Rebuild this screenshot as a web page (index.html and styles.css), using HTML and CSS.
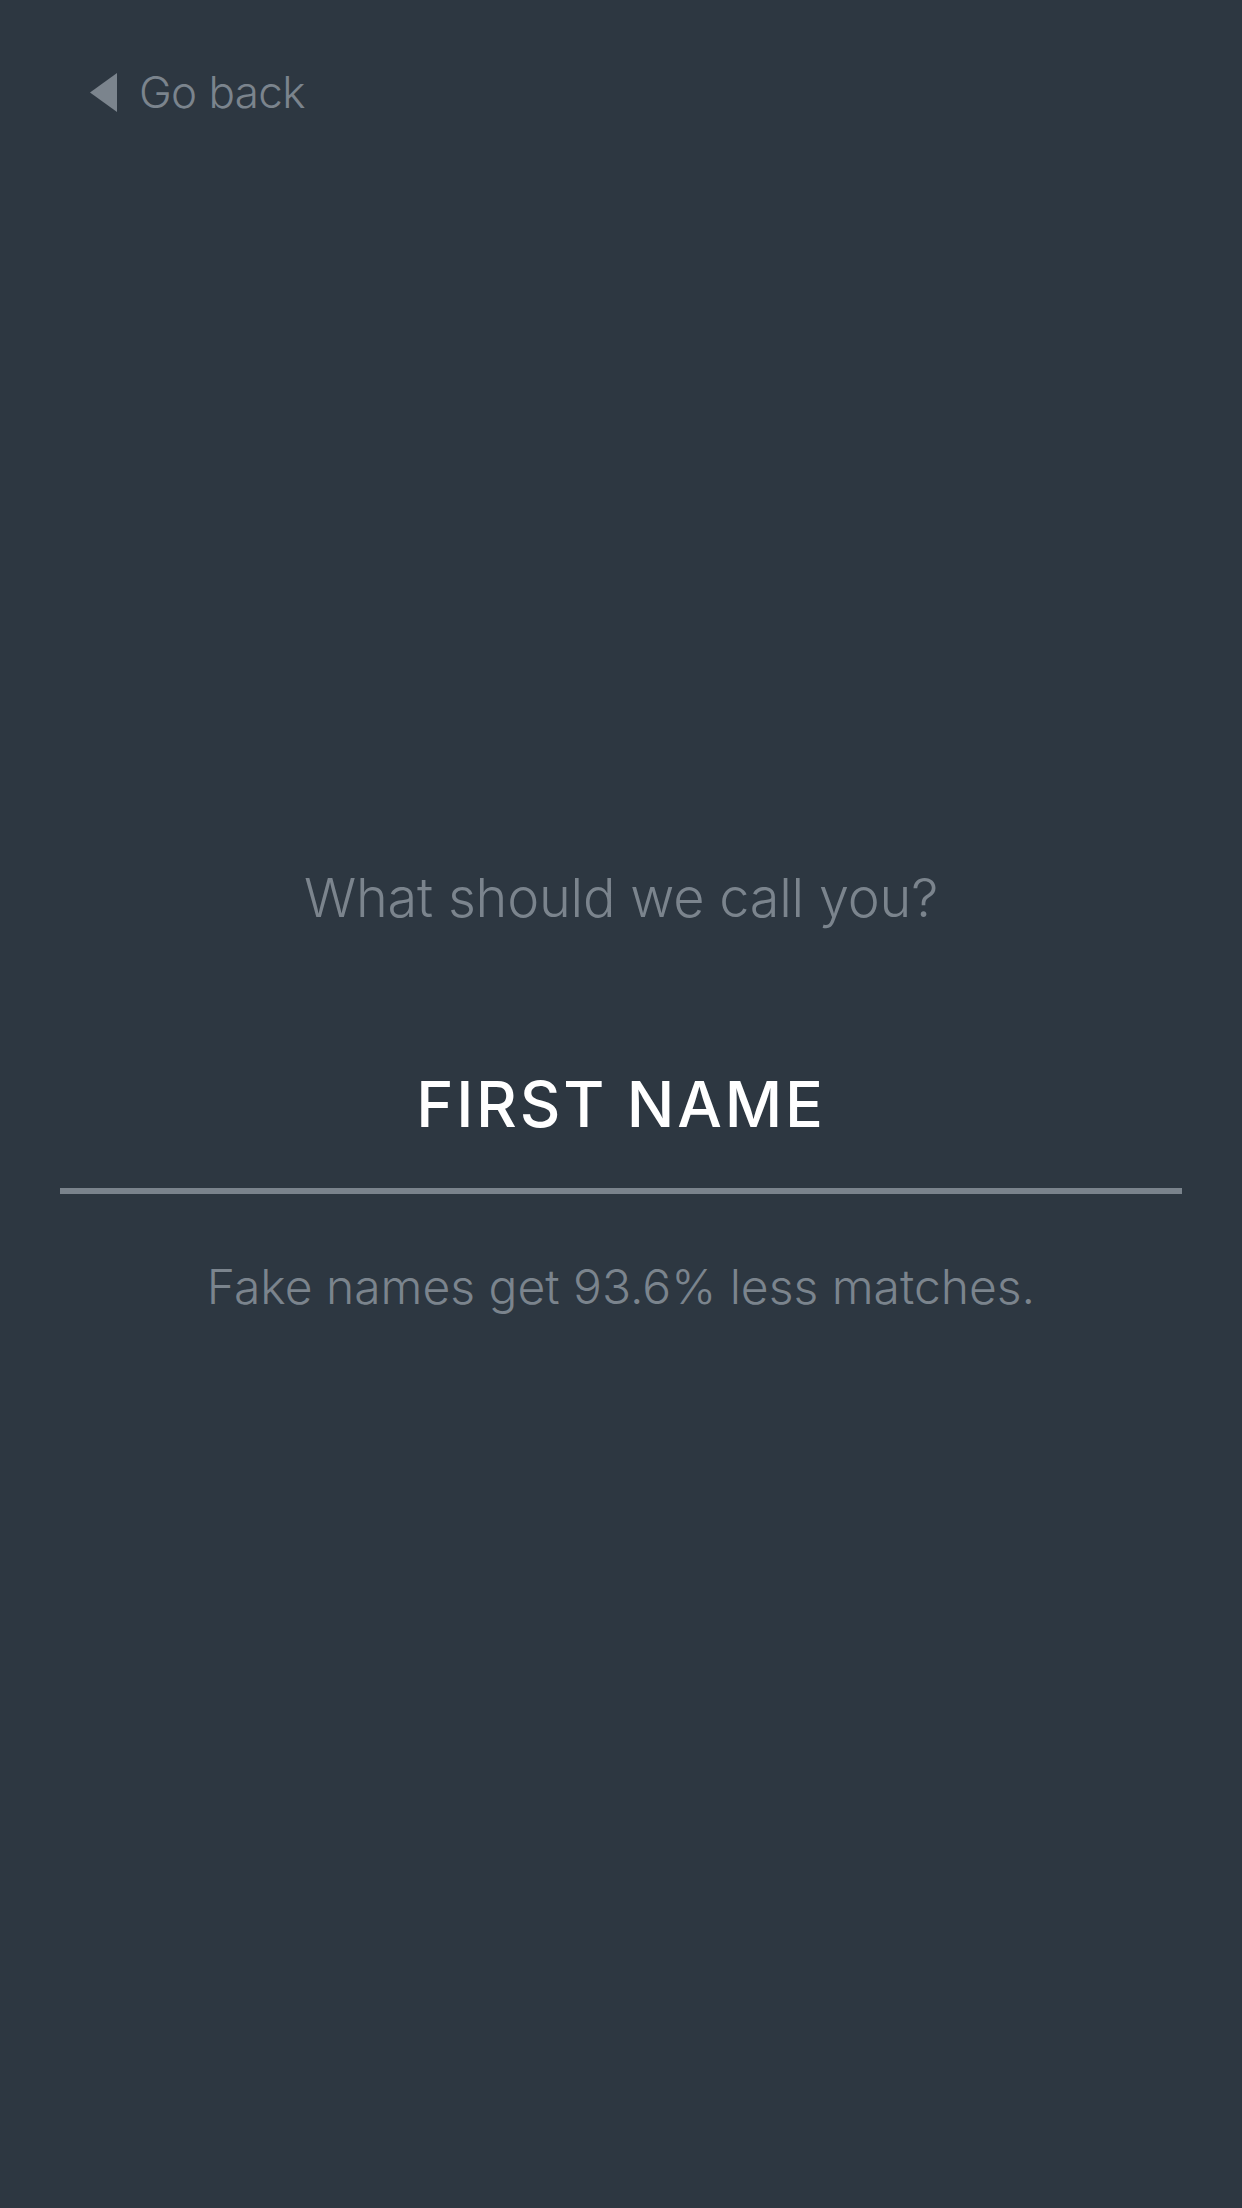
FILE: index.html
```html
<!DOCTYPE html>
<html lang="en">
<head>
<meta charset="utf-8">
<title>First name</title>
<link rel="stylesheet" href="styles.css">
</head>
<body>
<div class="screen">
  <header class="topbar">
    <a class="back" href="#">
      <svg class="back-icon" width="27" height="39" viewBox="0 0 27 39" aria-hidden="true"><polygon points="27,0 27,39 0,19.5" fill="#7b848d"/></svg>
      <span class="back-label">Go back</span>
    </a>
  </header>
  <main class="content">
    <h1 class="prompt">What should we call you?</h1>
    <div class="field">
      <div class="field-placeholder">FIRST NAME</div>
    </div>
    <p class="hint">Fake names get 93.6% less matches.</p>
  </main>
</div>
</body>
</html>
```
FILE: styles.css
```css
html, body {
  margin: 0;
  padding: 0;
  background: #2d3741;
}
.screen {
  width: 1242px;
  height: 2208px;
  background: #2d3741;
  font-family: Inter, Lato, sans-serif;
  color: #7b848d;
  overflow: hidden;
}
.topbar {
  padding: 70px 0 0 90px;
}
.back {
  display: flex;
  align-items: center;
  text-decoration: none;
  color: #7b848d;
}
.back-icon {
  display: block;
  margin-right: 22px;
}
.back-label {
  font-size: 44px;
  line-height: 44px;
  font-weight: 300;
  letter-spacing: -0.6px;
}
.content {
  display: flex;
  flex-direction: column;
  align-items: center;
  margin-top: 757px;
}
.prompt {
  margin: 0;
  font-size: 54px;
  line-height: 54px;
  font-weight: 300;
  letter-spacing: -0.2px;
  color: #7b848d;
}
.field {
  align-self: stretch;
  margin: 148px 60px 0;
  padding-bottom: 52px;
  border-bottom: 6px solid #7a838c;
  text-align: center;
}
.field-placeholder {
  font-size: 63px;
  line-height: 63px;
  font-weight: 500;
  letter-spacing: 2.8px;
  color: #ffffff;
}
.hint {
  margin: 69px 0 0;
  font-size: 48px;
  line-height: 48px;
  font-weight: 300;
  color: #7b848d;
}
```
